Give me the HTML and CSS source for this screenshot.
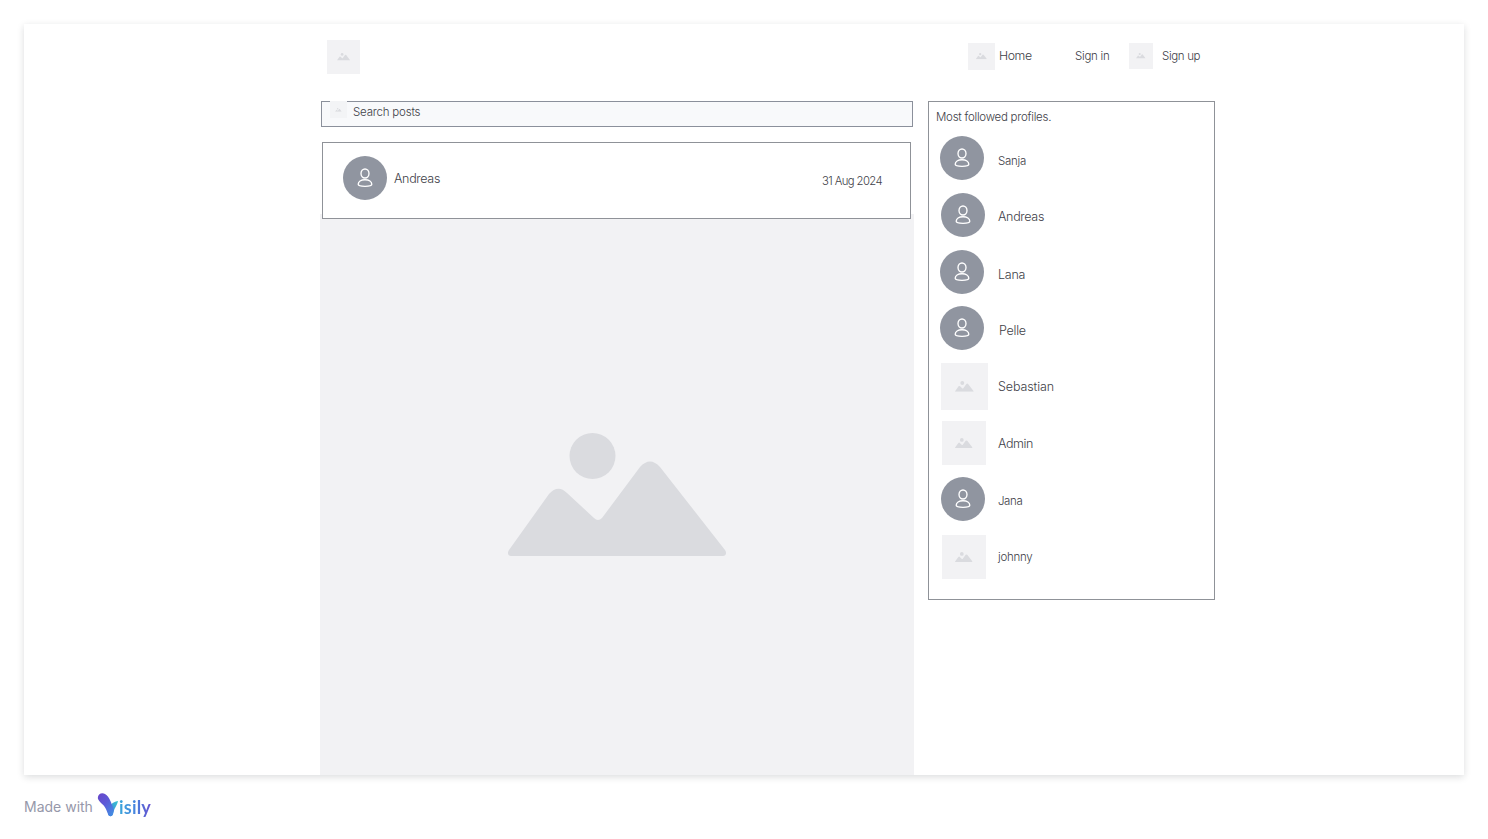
FILE: index.html
```html
<!DOCTYPE html>
<html lang="en">
<head>
<meta charset="utf-8">
<title>Posts</title>
<link rel="stylesheet" href="styles.css">
</head>
<body>
<svg class="defs" width="0" height="0">
  <symbol id="picture" viewBox="0 0 218 124">
    <circle cx="84.5" cy="24" r="23"/>
    <path d="M3 124C0 124-1 121 1 118L41 62Q50 52 59 61L86 86Q90 90 94 86L132 35Q142 24 152 35L217 118C219 121 218 124 215 124Z"/>
  </symbol>
  <symbol id="person" viewBox="0 0 16 20">
    <ellipse cx="8" cy="5.5" rx="4" ry="4.5"/>
    <path d="M1.2 16.3C1.2 13.6 4 11.7 8 11.7S14.8 13.6 14.8 16.3C14.8 17.8 12 18.4 8 18.4S1.2 17.8 1.2 16.3Z"/>
  </symbol>
</svg>
<div class="board">
  <header class="header">
    <div class="picture logo"><svg><use href="#picture"/></svg></div>
    <nav class="nav">
      <div class="picture home-icon"><svg><use href="#picture"/></svg></div>
      <span class="text home">Home</span>
      <span class="text sign-in">Sign in</span>
      <div class="picture up-icon"><svg><use href="#picture"/></svg></div>
      <span class="text sign-up">Sign up</span>
    </nav>
  </header>
  <div class="columns">
    <main class="feed">
      <div class="search">
        <div class="picture search-icon"><svg><use href="#picture"/></svg></div>
        <span class="text search-text">Search posts</span>
      </div>
      <article class="post">
        <div class="post-head">
          <div class="avatar"><svg><use href="#person"/></svg></div>
          <span class="text author">Andreas</span>
          <span class="text date">31 Aug 2024</span>
        </div>
        <div class="picture post-image"><svg><use href="#picture"/></svg></div>
      </article>
    </main>
    <aside class="profiles">
      <h2 class="text title">Most followed profiles.</h2>
      <div class="row"><div class="avatar"><svg><use href="#person"/></svg></div><span class="text name sanja">Sanja</span></div>
      <div class="row shifted"><div class="avatar"><svg><use href="#person"/></svg></div><span class="text name andreas">Andreas</span></div>
      <div class="row lana-row"><div class="avatar"><svg><use href="#person"/></svg></div><span class="text name lana">Lana</span></div>
      <div class="row"><div class="avatar"><svg><use href="#person"/></svg></div><span class="text name pelle">Pelle</span></div>
      <div class="row large"><div class="picture"><svg><use href="#picture"/></svg></div><span class="text name sebastian">Sebastian</span></div>
      <div class="row inset admin-row"><div class="picture"><svg><use href="#picture"/></svg></div><span class="text name admin">Admin</span></div>
      <div class="row shifted"><div class="avatar"><svg><use href="#person"/></svg></div><span class="text name jana">Jana</span></div>
      <div class="row inset"><div class="picture"><svg><use href="#picture"/></svg></div><span class="text name johnny">johnny</span></div>
    </aside>
  </div>
</div>
<footer class="footer">
  <span class="made">Made with</span>
  <svg class="mark" viewBox="0 0 22 24">
    <defs>
      <linearGradient id="stem" x1="0" y1="0" x2=".8" y2="1"><stop stop-color="#6846c8"/><stop offset=".5" stop-color="#5c5ad8"/><stop offset="1" stop-color="#438ce2"/></linearGradient>
      <linearGradient id="arm" x1="1" y1="0" x2="0" y2="1"><stop stop-color="#35c5cf"/><stop offset="1" stop-color="#4778e0"/></linearGradient>
    </defs>
    <path fill="url(#arm)" d="M11 19C13 12 15 9 21 8C20 13 17 15 16 21C15 24 12 24 11 21Z"/>
    <path fill="url(#stem)" d="M1 6C0 2 4-1 8 1C13 4 14 10 16 14L17 17L16 21C15 24 12 24 11 21C9 16 8 13 4 10Q2 8 1 6Z"/>
  </svg>
  <span class="brand">isily</span>
</footer>
</body>
</html>
```
FILE: styles.css
```css
* { box-sizing: border-box; }
body { margin: 0; padding: 24px; height: 839px; overflow: hidden; background: #fff; font-family: Inter, "Noto Sans", sans-serif; }
.defs { display: block; height: 0; }
.board { width: 1440px; height: 751px; background: #fff; box-shadow: 0 2px 7px rgba(20, 24, 36, .15); display: flex; flex-direction: column; overflow: visible; }
.header { height: 77px; padding: 16px 0 0 303px; display: flex; align-items: flex-start; }
.nav { display: flex; align-items: flex-start; margin: 3px 0 0 608px; }
.text { display: block; margin: 0; font-size: 11.5px; font-weight: 300; line-height: 16px; letter-spacing: -.26px; color: #3e4148; white-space: nowrap; }
.picture { display: flex; align-items: center; justify-content: center; flex: none; background: #f2f2f4; color: #dadbdf; }
.picture svg { width: 40%; aspect-ratio: 218 / 124; fill: currentColor; overflow: visible; }
.avatar { width: 44px; height: 44px; flex: none; display: flex; align-items: center; justify-content: center; border-radius: 50%; background: #9095a0; }
.avatar svg { width: 16px; height: 20px; fill: none; stroke: #fff; stroke-width: 1.35; }
.logo { width: 33px; height: 34px; }
.home-icon { width: 27px; height: 27px; }
.home { width: 76px; margin: 5px 0 0 4px; font-size: 12.3px; letter-spacing: -.4px; }
.sign-in { width: 54px; margin-top: 5px; }
.up-icon { width: 24px; height: 26px; }
.sign-up { margin: 5px 0 0 9px; letter-spacing: -.35px; }
.columns { display: flex; align-items: flex-start; height: 674px; padding-left: 296px; }
.feed { width: 594px; height: 674px; display: flex; flex-direction: column; }
.search { width: 592px; height: 26px; margin-left: 1px; display: flex; flex: none; border: 1px solid #8b909b; background: #f8f9fb; }
.search-icon { width: 17px; height: 17px; margin: -1px 0 0 8px; background: #f3f4f6; }
.search-text { margin: 2px 0 0 6px; letter-spacing: -.2px; }
.post { margin-top: 15px; flex: 1; display: flex; flex-direction: column; }
.post-head { z-index: 1; width: 589px; height: 77px; margin: 0 0 -5px 2px; display: flex; align-items: flex-start; flex: none; padding: 13px 28px 0 20px; border: 1px solid #8f9298; background: #fff; }
.author { margin: 15px 0 0 7px; font-size: 12.5px; letter-spacing: -.32px; }
.date { margin: 17px 0 0 auto; font-size: 11.3px; letter-spacing: -.6px; }
.post-image { flex: 1; padding-bottom: 2px; background: #f2f2f4; }
.post-image svg { width: 218px; }
.profiles { width: 287px; height: 499px; margin-left: 14px; padding: 7px 0 0 11px; border: 1px solid #8f9298; }
.title { height: 27px; margin-left: -4px; }
.row { width: 200px; height: 57px; display: flex; align-items: flex-start; }
.row .picture { width: 44px; height: 44px; }
.row.large .picture { width: 47px; height: 47px; }
.name { margin: 17px 0 0 14px; }
.shifted { padding-left: 1px; height: 57px; }
.lana-row { height: 56px; }
.large { padding-left: 1px; height: 58px; }
.inset { padding-left: 2px; }
.admin-row { height: 56px; }
.shifted:nth-last-child(2) { height: 58px; }
.andreas, .lana, .pelle, .sebastian, .admin { font-size: 12.5px; }
.andreas { margin: 16px 0 0 13px; letter-spacing: -.32px; }
.pelle { margin-left: 15px; }
.sebastian { margin: 16px 0 0 10px; letter-spacing: -.1px; }
.admin { margin: 15px 0 0 12px; letter-spacing: -.4px; }
.jana { margin: 16px 0 0 13px; letter-spacing: -.4px; }
.johnny { margin: 14px 0 0 12px; }
.footer { height: 40px; display: flex; align-items: flex-start; padding-top: 18px; }
.made { width: 73px; margin-top: 5px; font-size: 14px; line-height: 18px; color: #9698aa; white-space: nowrap; }
.mark { width: 22px; height: 24px; flex: none; }
.brand { font: 700 18px/22px Lato, sans-serif; letter-spacing: .2px; background: linear-gradient(90deg, #3ba6da, #4589df 45%, #6550cf); background-clip: text; -webkit-background-clip: text; color: transparent; margin-top: 3px; }
```
